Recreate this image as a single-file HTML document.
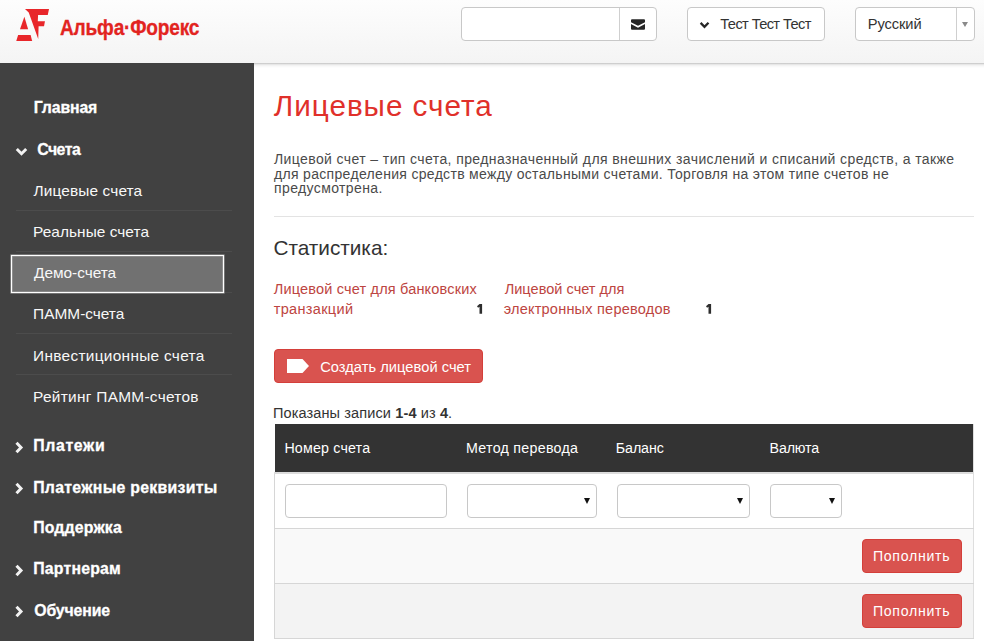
<!DOCTYPE html>
<html><head><meta charset="utf-8">
<style>
html,body{margin:0;padding:0;width:984px;height:641px;overflow:hidden;background:#fff;font-family:"Liberation Sans",sans-serif;}
.t{position:absolute;white-space:nowrap;}
.t b{font-weight:700}
#header{position:absolute;left:0;top:0;width:984px;height:63px;background:linear-gradient(#fdfdfd,#f4f4f4);}
#hshadow{position:absolute;left:254px;top:63px;width:730px;height:5px;background:linear-gradient(#c0c0c0,#e4e4e4 25%,#f6f6f6 55%,#ffffff);}
#sidebar{position:absolute;left:0;top:63px;width:254px;height:578px;background:#414141;}
.sep{position:absolute;left:16px;width:216px;height:1px;background:#4c4c4c;}
#sel{position:absolute;left:11px;top:255px;width:213px;height:38px;box-sizing:border-box;border:1px solid #ffffff;box-shadow:0 0 0 0.6px rgba(255,255,255,0.45), inset 0 0 0 0.6px rgba(255,255,255,0.35);background:#717171;}
.box{position:absolute;background:#fff;border:1px solid #c8c8c8;border-radius:4px;box-sizing:border-box;}
.vdiv{position:absolute;width:1px;background:#cfcfcf;}
.hr{position:absolute;height:1px;background:#e3e3e3;}
.rbtn{position:absolute;background:#d9534f;border:1px solid #d43f3a;border-radius:4px;box-sizing:border-box;}
.sel{position:absolute;background:#fff;border:1px solid #c8c8c8;border-radius:4px;box-sizing:border-box;}
.arr{position:absolute;width:0;height:0;border-left:3.2px solid transparent;border-right:3.2px solid transparent;border-top:6px solid #111;}
</style></head><body>
<div id="header"></div>
<div id="hshadow"></div>
<div id="sidebar"></div>
<svg style="position:absolute;left:10px;top:5px" width="50" height="40" viewBox="0 0 801 641">
<polygon fill="#e8262a" points="240,65 625,65 605,160 450,160 445,262 560,262 545,340 458,340 452,545 300,120"/>
<polygon fill="#e8262a" points="230,190 290,390 160,390"/>
<polygon fill="#e8262a" points="130,480 330,480 355,575 100,575"/>
</svg>
<!-- header controls -->
<div class="box" style="left:461px;top:7px;width:196px;height:34px;"></div>
<div class="vdiv" style="left:619px;top:8px;height:32px;"></div>
<svg style="position:absolute;left:631px;top:19px" width="14" height="11" viewBox="0 0 14 10.5">
<path fill="#262626" d="M1 0 H13 Q14 0 14 1 V2.9 L7 6.5 L0 2.9 V1 Q0 0 1 0 Z M0 4.8 L7 8.5 L14 4.8 V9.5 Q14 10.5 13 10.5 H1 Q0 10.5 0 9.5 Z"/>
</svg>
<div class="box" style="left:687px;top:7px;width:138px;height:34px;"></div>
<svg style="position:absolute;left:699px;top:21px" width="12" height="8" viewBox="0 0 12 8">
<path d="M1.6 1.9 L5.5 5.8 L9.5 1.8" stroke="#262626" stroke-width="2.3" fill="none"/>
</svg>
<div class="box" style="left:855px;top:7px;width:120px;height:34px;"></div>
<div class="vdiv" style="left:956px;top:8px;height:32px;"></div>
<div class="arr" style="left:962px;top:21.5px;border-left-width:3.2px;border-right-width:3.2px;border-top:5.5px solid #8a8a8a"></div>

<!-- sidebar -->
<svg style="position:absolute;left:15px;top:147px" width="13" height="10" viewBox="0 0 13 10">
<path d="M1.8 2 L6.5 6.7 L11.2 2" stroke="#f2f2f2" stroke-width="3" fill="none"/>
</svg>
<div class="sep" style="top:210px"></div>
<div class="sep" style="top:251px"></div>
<div class="sep" style="top:292px"></div>
<div class="sep" style="top:333px"></div>
<div class="sep" style="top:374px"></div>
<div id="sel"></div>
<svg style="position:absolute;left:14px;top:441px" width="10" height="13" viewBox="0 0 10 13"><path d="M2.5 1.8 L7 6.5 L2.5 11.2" stroke="#f2f2f2" stroke-width="3" fill="none"/></svg>
<svg style="position:absolute;left:14px;top:482px" width="10" height="13" viewBox="0 0 10 13"><path d="M2.5 1.8 L7 6.5 L2.5 11.2" stroke="#f2f2f2" stroke-width="3" fill="none"/></svg>
<svg style="position:absolute;left:14px;top:564px" width="10" height="13" viewBox="0 0 10 13"><path d="M2.5 1.8 L7 6.5 L2.5 11.2" stroke="#f2f2f2" stroke-width="3" fill="none"/></svg>
<svg style="position:absolute;left:14px;top:605px" width="10" height="13" viewBox="0 0 10 13"><path d="M2.5 1.8 L7 6.5 L2.5 11.2" stroke="#f2f2f2" stroke-width="3" fill="none"/></svg>

<!-- content -->
<div class="hr" style="left:274px;top:216px;width:700px;"></div>
<div class="rbtn" style="left:274px;top:349px;width:209px;height:34px;"></div>
<svg style="position:absolute;left:287px;top:359px" width="23" height="15" viewBox="0 0 23 15">
<path fill="#fff" d="M0 0 H15.5 L22 7 L15.5 14 H0 Z"/>
</svg>

<svg style="position:absolute;left:476.6px;top:304px" width="6" height="10" viewBox="0 0 6 10"><path fill="#2e2e2e" d="M2.5 0 H5.1 V9.8 H2.5 V2.7 L1.1 3.8 L0 2.3 Z"/></svg>
<svg style="position:absolute;left:706.3px;top:304px" width="6" height="10" viewBox="0 0 6 10"><path fill="#2e2e2e" d="M2.5 0 H5.1 V9.8 H2.5 V2.7 L1.1 3.8 L0 2.3 Z"/></svg>
<!-- table -->
<div style="position:absolute;left:275px;top:424px;width:698px;height:48px;background:#333;"></div>
<div style="position:absolute;left:274px;top:472px;width:700px;height:2px;background:#dcdcdc;"></div>
<div style="position:absolute;left:274px;top:474px;width:1px;height:165px;background:#d6d6d6;"></div>
<div style="position:absolute;left:973px;top:424px;width:1px;height:215px;background:#dedede;"></div>
<div style="position:absolute;left:275px;top:529px;width:698px;height:54px;background:#f9f9f9;"></div>
<div style="position:absolute;left:275px;top:584px;width:698px;height:54px;background:#f3f3f3;"></div>
<div style="position:absolute;left:274px;top:528px;width:700px;height:1px;background:#d6d6d6;"></div>
<div style="position:absolute;left:274px;top:583px;width:700px;height:1px;background:#d6d6d6;"></div>
<div style="position:absolute;left:274px;top:638px;width:700px;height:1px;background:#d6d6d6;"></div>
<div class="box" style="left:285px;top:484px;width:162px;height:34px;"></div>
<div class="sel" style="left:467px;top:484px;width:130px;height:34px;"></div>
<div class="arr" style="left:584px;top:498px"></div>
<div class="sel" style="left:617px;top:484px;width:133px;height:34px;"></div>
<div class="arr" style="left:737px;top:498px"></div>
<div class="sel" style="left:770px;top:484px;width:72px;height:34px;"></div>
<div class="arr" style="left:829px;top:498px"></div>
<div class="rbtn" style="left:862px;top:539px;width:100px;height:34px;"></div>
<div class="rbtn" style="left:862px;top:594px;width:100px;height:34px;"></div>

<div id="logo" class="t" style="left:59.51px;top:16.84px;font-size:21.22px;line-height:21.22px;letter-spacing:-0.207px;font-weight:700;color:#e2241f;transform:scaleX(0.9);transform-origin:0 0;-webkit-text-stroke:0.3px #e2241f;">Альфа·Форекс</div>
<div id="user" class="t" style="left:720.37px;top:17.37px;font-size:14.68px;line-height:14.68px;letter-spacing:-0.631px;font-weight:400;color:#333;">Тест Тест Тест</div>
<div id="lang" class="t" style="left:867.77px;top:17.17px;font-size:14.68px;line-height:14.68px;letter-spacing:-0.100px;font-weight:400;color:#333;">Русский</div>
<div id="m_home" class="t" style="left:33.79px;top:99.99px;font-size:15.84px;line-height:15.84px;letter-spacing:-0.133px;font-weight:700;color:#ffffff;-webkit-text-stroke:0.3px #ffffff;">Главная</div>
<div id="m_acc" class="t" style="left:37.19px;top:141.59px;font-size:15.84px;line-height:15.84px;letter-spacing:-0.500px;font-weight:700;color:#ffffff;-webkit-text-stroke:0.3px #ffffff;">Счета</div>
<div id="s1" class="t" style="left:33.62px;top:182.86px;font-size:15.41px;line-height:15.41px;letter-spacing:0.117px;font-weight:400;color:#f8f8f8;">Лицевые счета</div>
<div id="s2" class="t" style="left:33.12px;top:224.16px;font-size:15.41px;line-height:15.41px;letter-spacing:0.046px;font-weight:400;color:#f8f8f8;">Реальные счета</div>
<div id="s3" class="t" style="left:34.12px;top:265.36px;font-size:15.41px;line-height:15.41px;letter-spacing:-0.044px;font-weight:400;color:#f8f8f8;">Демо-счета</div>
<div id="s4" class="t" style="left:33.12px;top:306.36px;font-size:15.41px;line-height:15.41px;letter-spacing:0.000px;font-weight:400;color:#f8f8f8;">ПАММ-счета</div>
<div id="s5" class="t" style="left:33.12px;top:347.66px;font-size:15.41px;line-height:15.41px;letter-spacing:0.295px;font-weight:400;color:#f8f8f8;">Инвестиционные счета</div>
<div id="s6" class="t" style="left:33.12px;top:388.66px;font-size:15.41px;line-height:15.41px;letter-spacing:0.289px;font-weight:400;color:#f8f8f8;">Рейтинг ПАММ-счетов</div>
<div id="m_pay" class="t" style="left:33.19px;top:438.39px;font-size:15.84px;line-height:15.84px;letter-spacing:0.667px;font-weight:700;color:#ffffff;-webkit-text-stroke:0.3px #ffffff;">Платежи</div>
<div id="m_req" class="t" style="left:33.19px;top:479.99px;font-size:15.84px;line-height:15.84px;letter-spacing:0.300px;font-weight:700;color:#ffffff;-webkit-text-stroke:0.3px #ffffff;">Платежные реквизиты</div>
<div id="m_sup" class="t" style="left:33.19px;top:520.19px;font-size:15.84px;line-height:15.84px;letter-spacing:0.175px;font-weight:700;color:#ffffff;-webkit-text-stroke:0.3px #ffffff;">Поддержка</div>
<div id="m_par" class="t" style="left:33.19px;top:560.79px;font-size:15.84px;line-height:15.84px;letter-spacing:0.200px;font-weight:700;color:#ffffff;-webkit-text-stroke:0.3px #ffffff;">Партнерам</div>
<div id="m_edu" class="t" style="left:34.19px;top:603.19px;font-size:15.84px;line-height:15.84px;letter-spacing:-0.114px;font-weight:700;color:#ffffff;-webkit-text-stroke:0.3px #ffffff;">Обучение</div>
<div id="title" class="t" style="left:273.82px;top:90.60px;font-size:29.65px;line-height:29.65px;letter-spacing:0.983px;font-weight:400;color:#e0302a;">Лицевые счета</div>
<div id="p1" class="t" style="left:274.02px;top:151.75px;font-size:14.00px;line-height:14.00px;letter-spacing:0.396px;font-weight:400;color:#4a4a4a;">Лицевой счет – тип счета, предназначенный для внешних зачислений и списаний средств, а также</div>
<div id="p2" class="t" style="left:274.02px;top:166.65px;font-size:14.00px;line-height:14.00px;letter-spacing:0.317px;font-weight:400;color:#4a4a4a;">для распределения средств между остальными счетами. Торговля на этом типе счетов не</div>
<div id="p3" class="t" style="left:274.02px;top:181.45px;font-size:14.00px;line-height:14.00px;letter-spacing:0.385px;font-weight:400;color:#4a4a4a;">предусмотрена.</div>
<div id="stat" class="t" style="left:273.55px;top:238.41px;font-size:20.78px;line-height:20.78px;letter-spacing:-0.020px;font-weight:400;color:#333;">Статистика:</div>
<div id="st1a" class="t" style="left:273.78px;top:281.70px;font-size:14.53px;line-height:14.53px;letter-spacing:0.169px;font-weight:400;color:#bd4541;">Лицевой счет для банковских</div>
<div id="st1b" class="t" style="left:273.78px;top:302.10px;font-size:14.53px;line-height:14.53px;letter-spacing:0.311px;font-weight:400;color:#bd4541;">транзакций</div>
<div id="st2a" class="t" style="left:504.68px;top:281.90px;font-size:14.53px;line-height:14.53px;letter-spacing:0.027px;font-weight:400;color:#bd4541;">Лицевой счет для</div>
<div id="st2b" class="t" style="left:503.68px;top:301.50px;font-size:14.53px;line-height:14.53px;letter-spacing:0.220px;font-weight:400;color:#bd4541;">электронных переводов</div>
<div id="btn" class="t" style="left:320.17px;top:359.77px;font-size:14.68px;line-height:14.68px;letter-spacing:0.032px;font-weight:400;color:#ffffff;">Создать лицевой счет</div>
<div id="show" class="t" style="left:272.98px;top:405.90px;font-size:14.53px;line-height:14.53px;letter-spacing:0.117px;font-weight:400;color:#333;">Показаны записи <b>1-4</b> из <b>4</b>.</div>
<div id="th1" class="t" style="left:284.40px;top:440.94px;font-size:14.24px;line-height:14.24px;letter-spacing:0.180px;font-weight:400;color:#ffffff;">Номер счета</div>
<div id="th2" class="t" style="left:466.00px;top:440.94px;font-size:14.24px;line-height:14.24px;letter-spacing:0.277px;font-weight:400;color:#ffffff;">Метод перевода</div>
<div id="th3" class="t" style="left:615.80px;top:440.94px;font-size:14.24px;line-height:14.24px;letter-spacing:-0.080px;font-weight:400;color:#ffffff;">Баланс</div>
<div id="th4" class="t" style="left:769.60px;top:440.94px;font-size:14.24px;line-height:14.24px;letter-spacing:-0.160px;font-weight:400;color:#ffffff;">Валюта</div>
<div id="pop1" class="t" style="left:872.91px;top:548.87px;font-size:14.10px;line-height:14.10px;letter-spacing:0.725px;font-weight:400;color:#ffffff;">Пополнить</div>
<div id="pop2" class="t" style="left:872.91px;top:603.87px;font-size:14.10px;line-height:14.10px;letter-spacing:0.725px;font-weight:400;color:#ffffff;">Пополнить</div>
</body></html>
